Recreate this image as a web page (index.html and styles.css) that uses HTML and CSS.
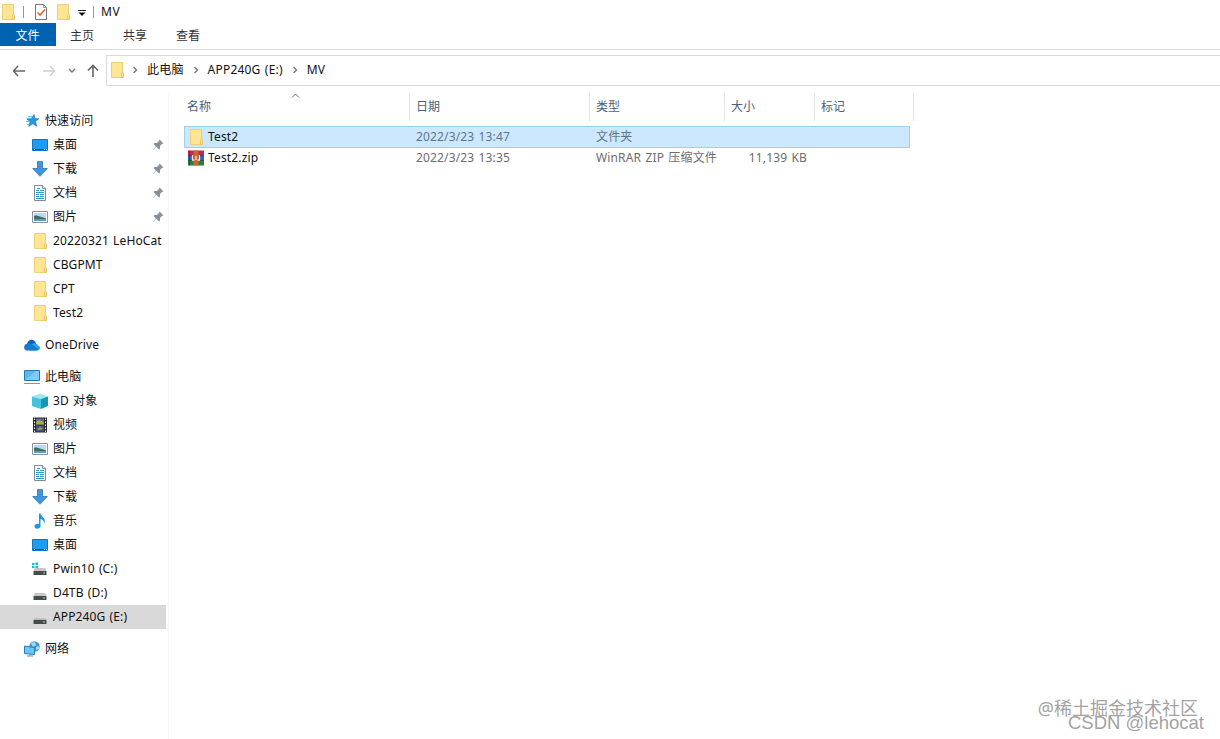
FILE: index.html
```html
<!DOCTYPE html>
<html lang="zh-CN">
<head>
    <meta charset="UTF-8">
    <meta name="viewport" content="width=device-width, initial-scale=1.0">
    <title>MV</title>
    <link rel="stylesheet" href="styles.css">
</head>
<body>
    <!-- shared icons -->
    <svg class="sprite">
        <symbol id="folder" viewBox="0 0 16 16">
            <path d="M2.500.5h11v10l.5 1v4H2.500z" fill="#ffe594" stroke="#edcf78"/>
            <path d="M12.500 15.500v-4l1-1.500 1 1.500v4z" fill="#ffe591" stroke="#e5bf55" stroke-width=".8"/>
        </symbol>
        <symbol id="desktop" viewBox="0 0 16 16">
            <path d="M.5 2.500h15v11H.5z" fill="#1b9df5" stroke="#1578bd"/>
            <path d="M1 12.500h14" stroke="#0b5a99"/>
            <path d="M2 12.500h1M12 12.500h1M14 12.500h1" stroke="#d8efff"/>
        </symbol>
        <symbol id="download" viewBox="0 0 16 16">
            <path d="M5.500.5h5v7h4.800L8 15.300.700 7.500h4.800z" fill="#3f96de" stroke="#2d78bb" stroke-width=".8"/>
        </symbol>
        <symbol id="document" viewBox="0 0 16 16">
            <path d="M2.500.5h8l3 3v12h-11z" fill="#fff" stroke="#85898d"/>
            <path d="M10.500.5v3h3" fill="#eee" stroke="#85898d"/>
            <path d="M5 3.500h3M4 5.500h3M8 5.500h4M4 7.500h8M4 9.500h3M8 9.500h4M4 11.500h3M8 11.500h4M4 13.500h8" stroke="#2a9cc4"/>
        </symbol>
        <symbol id="picture" viewBox="0 0 16 16">
            <path d="M.5 2.500h15v11H.5z" fill="#fff" stroke="#8a9299"/>
            <path d="M2 4h12v8H2z" fill="#b5dcf6"/>
            <path d="M2 7c3-1.500 5 1 12 2v1.500H2z" fill="#427067"/>
            <path d="M2 10h12v2H2z" fill="#5b9bcb"/>
        </symbol>
        <symbol id="pin" viewBox="0 0 12 12">
            <path d="M7.500.5l4 4-1.300.3-2.200 2.200.1 2.500-1 1L4.300 7.700.8 11.200.5 10.900 4 7.400 1.500 4.900l1-1 2.500.1 2.200-2.200z" fill="#858f98"/>
        </symbol>
        <symbol id="chevron" viewBox="0 0 6 8">
            <path d="M1.500 1l3 3-3 3" fill="none" stroke="#777" stroke-width="1.400"/>
        </symbol>
        <symbol id="drive" viewBox="0 0 16 16">
            <path d="M3 8h10l1.500 3h-13z" fill="#c6c6c6"/>
            <path d="M1.500 11h13v4h-13z" fill="#484b4d"/>
            <path d="M11 13h2" stroke="#77e38a"/>
        </symbol>
        <symbol id="drive-flat" viewBox="0 0 16 16">
            <path d="M2.500 9.500h11l1 1.500h-13z" fill="#b4b4b4"/>
            <path d="M1.500 11h13v4h-13z" fill="#484b4d"/>
            <path d="M11 13h2" stroke="#77e38a"/>
        </symbol>
    </svg>

    <div class="titlebar">
        <svg class="icon title-folder"><use href="#folder"/></svg>
        <span class="divider"></span>
        <svg class="icon check" viewBox="0 0 16 16">
            <path d="M2.500.5h8l3 3v12h-11z" fill="#fff" stroke="#77777a"/>
            <path d="M10.500.5v3h3" fill="none" stroke="#999"/>
            <path d="M4.500 8.500l2.500 2.500L12 5.500" fill="none" stroke="#e36231" stroke-width="1.600"/>
        </svg>
        <svg class="icon new-folder"><use href="#folder"/></svg>
        <svg class="drop" viewBox="0 0 8 6"><path d="M0 .5h8" stroke="#222"/><path d="M.5 2.500h7L4 6z" fill="#111"/></svg>
        <span class="divider"></span>
        <span class="title">MV</span>
    </div>

    <div class="tabs">
        <span class="tab active">文件</span>
        <span class="tab">主页</span>
        <span class="tab">共享</span>
        <span class="tab">查看</span>
    </div>

    <div class="nav">
        <div class="arrows">
            <svg width="14" height="12" viewBox="0 0 14 12"><path d="M6 1L1.500 6 6 11M1.500 6H13" fill="none" stroke="#666" stroke-width="1.500"/></svg>
            <svg class="forward" width="14" height="12" viewBox="0 0 14 12"><path d="M8 1l4.500 5L8 11M12.500 6H1" fill="none" stroke="#d0d0d0" stroke-width="1.500"/></svg>
            <svg class="recent" width="8" height="6" viewBox="0 0 8 6"><path d="M1 1l3 3 3-3" fill="none" stroke="#777" stroke-width="1.400"/></svg>
            <svg class="up" width="12" height="14" viewBox="0 0 12 14"><path d="M1 6.500l5-5 5 5M6 1.500V13" fill="none" stroke="#666" stroke-width="1.600"/></svg>
        </div>
        <div class="address">
            <svg class="icon"><use href="#folder"/></svg>
            <svg class="chevron"><use href="#chevron"/></svg>
            <span>此电脑</span>
            <svg class="chevron"><use href="#chevron"/></svg>
            <span class="drive-name">APP240G (E:)</span>
            <svg class="chevron"><use href="#chevron"/></svg>
            <span>MV</span>
        </div>
    </div>

    <div class="main">
        <div class="sidebar">
            <div class="item root">
                <svg class="icon" viewBox="0 0 16 16">
                    <path d="M10 1.500l.9 4 4.100.2-3.500 2.600 1.200 4.900-3.900-2.500-4 2.800 1.300-4.700L3 6l4.500-.4z" fill="#2199dc" stroke="#1779b4" stroke-width=".6"/>
                    <path d="M4 3.500h4M2.500 5.500h3M2 8.500h4M3 11.500h2" stroke="#62bff0"/>
                </svg>
                <span>快速访问</span>
            </div>
            <div class="item"><svg class="icon"><use href="#desktop"/></svg><span>桌面</span><svg class="pin"><use href="#pin"/></svg></div>
            <div class="item"><svg class="icon"><use href="#download"/></svg><span>下载</span><svg class="pin"><use href="#pin"/></svg></div>
            <div class="item"><svg class="icon"><use href="#document"/></svg><span>文档</span><svg class="pin"><use href="#pin"/></svg></div>
            <div class="item"><svg class="icon"><use href="#picture"/></svg><span>图片</span><svg class="pin"><use href="#pin"/></svg></div>
            <div class="item"><svg class="icon"><use href="#folder"/></svg><span>20220321 LeHoCat</span></div>
            <div class="item"><svg class="icon"><use href="#folder"/></svg><span>CBGPMT</span></div>
            <div class="item"><svg class="icon"><use href="#folder"/></svg><span>CPT</span></div>
            <div class="item"><svg class="icon"><use href="#folder"/></svg><span>Test2</span></div>

            <div class="item root group">
                <svg class="icon" viewBox="0 0 16 16">
                    <path d="M3 7.500C3.500 2 10.500 1 12 6.500l-3 4z" fill="#0b64b8"/>
                    <path d="M7 8c2-3 6.500-2 7 .5 3 .5 2.500 5-.5 5H5z" fill="#29a5ea"/>
                    <path d="M3.500 6.500c2-.8 4 .5 10.500 5.500-.5 1-1 1.500-2 1.500H3C-1 13-.8 7 3.500 6.500z" fill="#147bd1"/>
                </svg>
                <span>OneDrive</span>
            </div>

            <div class="item root group">
                <svg class="icon" viewBox="0 0 16 16">
                    <path d="M.5 1.500h15v10H.5z" fill="#55b9f3" stroke="#247cb5"/>
                    <path d="M1 11L12 2h3v9z" fill="#7acdfa"/>
                    <path d="M0 14.500h16" stroke="#8c9297"/>
                </svg>
                <span>此电脑</span>
            </div>
            <div class="item">
                <svg class="icon" viewBox="0 0 16 16">
                    <path d="M0 3.500L8 .5l8 3L9 6z" fill="#9ee7f2"/>
                    <path d="M0 3.500L9 6v10l-9-3z" fill="#42c5dc"/>
                    <path d="M9 6l7-2.500V13l-7 3z" fill="#1596b2"/>
                </svg>
                <span>3D 对象</span>
            </div>
            <div class="item">
                <svg class="icon" viewBox="0 0 16 16">
                    <path d="M1 .5h14v15H1z" fill="#292929"/>
                    <path d="M4 1.500h8v6H4z" fill="#526f9b"/>
                    <path d="M4 8.500h8v6H4z" fill="#415887"/>
                    <path d="M4 5l3-2 3 1 2 2v1.500H4zM5 13l3-3 3 2" fill="#b4a64d"/>
                    <path d="M2.500 1.500v14M13.500 1.500v14" stroke="#fff" stroke-dasharray="1.500 1.500"/>
                </svg>
                <span>视频</span>
            </div>
            <div class="item"><svg class="icon"><use href="#picture"/></svg><span>图片</span></div>
            <div class="item"><svg class="icon"><use href="#document"/></svg><span>文档</span></div>
            <div class="item"><svg class="icon"><use href="#download"/></svg><span>下载</span></div>
            <div class="item">
                <svg class="icon" viewBox="0 0 16 16">
                    <path d="M7 .5h1.500c.5 3.500 6.500 4.500 3.500 10 .3-2.500-1.300-4-3.500-4.500V13c0 3.500-6 3.500-6 .5 0-2.300 2.500-3.200 4.500-2.500z" fill="#159ae2"/>
                </svg>
                <span>音乐</span>
            </div>
            <div class="item"><svg class="icon"><use href="#desktop"/></svg><span>桌面</span></div>
            <div class="item">
                <svg class="icon" viewBox="0 0 16 16">
                    <path d="M0 2h2.500v2H0zM3.500 1.500H6V4H3.500zM0 5h2.500v2H0zM3.500 5H6v2.500H3.500z" fill="#19b6da"/>
                    <use href="#drive" y="-1" width="16" height="16"/>
                </svg>
                <span>Pwin10 (C:)</span>
            </div>
            <div class="item"><svg class="icon"><use href="#drive"/></svg><span>D4TB (D:)</span></div>
            <div class="item selected"><svg class="icon"><use href="#drive-flat"/></svg><span>APP240G (E:)</span></div>

            <div class="item root group">
                <svg class="icon" viewBox="0 0 16 16">
                    <circle cx="10.500" cy="5.500" r="5.200" fill="#3a9bd8"/>
                    <path d="M7 2l4-1 1 3-3 2zM12 6l3-1v3l-3 1z" fill="#a5d8ee"/>
                    <path d="M.5 5l10 1.500v7l-10-1z" fill="#6cc5f5" stroke="#277db4"/>
                    <path d="M3 15h6M6 13v2" stroke="#4b9cca"/>
                </svg>
                <span>网络</span>
            </div>
        </div>

        <div class="files">
            <div class="columns">
                <span>名称</span>
                <span>日期</span>
                <span>类型</span>
                <span>大小</span>
                <span>标记</span>
                <svg class="sort" viewBox="0 0 8 5"><path d="M.5 4.500L4 1l3.500 3.500" fill="none" stroke="#666"/></svg>
            </div>
            <div class="file active">
                <span class="name"><svg class="icon"><use href="#folder"/></svg>Test2</span>
                <span>2022/3/23 13:47</span>
                <span>文件夹</span>
                <span class="size"></span>
            </div>
            <div class="file">
                <span class="name">
                    <svg class="icon" viewBox="0 0 16 16">
                        <path d="M0 .5h16v5H0z" fill="#b92e50"/>
                        <path d="M0 5.500h16v5H0z" fill="#3d5db0"/>
                        <path d="M0 10.500h16v5H0z" fill="#26813f"/>
                        <path d="M1.500.5v15" stroke="#222" stroke-opacity=".5"/>
                        <path d="M5.500.5h5v15h-5z" fill="#cd6429"/>
                        <path d="M4.500 5v5h2M11.500 5v5h-2M8 6v4" fill="none" stroke="#f5dfd1" stroke-width="1.300"/>
                        <path d="M0 5.500h4M12 5.500h4M0 10.500h4M12 10.500h4" stroke="#2b2940" stroke-width=".7"/>
                    </svg>Test2.zip
                </span>
                <span>2022/3/23 13:35</span>
                <span>WinRAR ZIP 压缩文件</span>
                <span class="size">11,139 KB</span>
            </div>
        </div>
    </div>

    <div class="watermark">
        <div class="site">@稀土掘金技术社区</div>
        <div class="author">CSDN @lehocat</div>
    </div>
</body>
</html>
```
FILE: styles.css
```css
* {
    box-sizing: border-box;
}
body {
    margin: 0;
    height: 739px;
    overflow: hidden;
    background: #fff;
    color: #111;
    font-family: "Noto Sans", "Noto Sans CJK SC", sans-serif;
    font-size: 12px;
    line-height: 20px;
    white-space: nowrap;
}
svg {
    display: block;
    flex: none;
}
.sprite {
    position: absolute;
    width: 0;
    height: 0;
}
.icon {
    width: 16px;
    height: 16px;
}
.titlebar {
    display: flex;
    align-items: center;
    height: 23px;
}
.titlebar .divider {
    width: 1px;
    height: 12px;
    background: #999;
}
.title-folder {
    margin-right: 7px;
}
.check {
    margin: 1px 6px 0 9px;
}
.drop {
    width: 8px;
    height: 6px;
    margin: 3px 7px 0 7px;
}
.title {
    margin-left: 7px;
    letter-spacing: 0.5px;
}
.tabs {
    display: flex;
    height: 27px;
    border-bottom: 1px solid #dadbdc;
}
.tab {
    width: 53px;
    height: 23px;
    padding-right: 1px;
    line-height: 25px;
    text-align: center;
    color: #333;
}
.tab.active {
    width: 56px;
    background: #0063b1;
    color: #fff;
}
.nav {
    display: flex;
    height: 41px;
    padding-top: 5px;
}
.arrows {
    display: flex;
    align-items: center;
    width: 106px;
    height: 32px;
    padding-left: 12px;
}
.forward {
    margin-left: 16px;
}
.recent {
    margin-left: 12px;
}
.up {
    margin-left: 11px;
}
.address {
    display: flex;
    align-items: center;
    flex: 1;
    height: 31px;
    padding: 0 0 1px 2px;
    border: 1px solid #d9d9d9;
    border-right: 0;
}
.chevron {
    width: 6px;
    height: 8px;
    margin: 0 9px;
}
.address .icon + .chevron {
    margin-left: 7px;
}
.address span {
    letter-spacing: 0.2px;
    word-spacing: 1px;
}
.main {
    display: flex;
    height: 648px;
}
.sidebar {
    width: 169px;
    padding-top: 18px;
    border-right: 1px solid #f5f5f5;
}
.item {
    display: flex;
    align-items: center;
    gap: 5px;
    width: 166px;
    height: 24px;
    padding-left: 32px;
    letter-spacing: 0.12px;
    word-spacing: 1px;
}
.item.root {
    padding-left: 24px;
}
.item.group {
    margin-top: 8px;
}
.item.selected {
    background: #d9d9d9;
}
.pin {
    width: 12px;
    height: 12px;
    margin: 0 2px 0 auto;
}
.files {
    flex: 1;
    padding: 2px 0 0 15px;
}
.columns,
.file {
    display: grid;
    grid-template-columns: 226px 180px 135px 90px 99px;
}
.columns {
    position: relative;
    width: 730px;
    height: 28px;
    margin-bottom: 5px;
    color: #4c607a;
}
.columns span {
    padding-left: 6px;
    line-height: 27px;
    border-right: 1px solid #e5e5e5;
}
.columns span:first-child {
    padding-left: 3px;
}
.sort {
    position: absolute;
    left: 107px;
    top: 0;
    width: 9px;
    height: 5px;
}
.file {
    width: 726px;
    height: 21px;
    line-height: 19px;
    color: #6d6d6d;
    border: 1px solid transparent;
    letter-spacing: 0.15px;
    word-spacing: 1px;
}
.file > span {
    padding-left: 5px;
}
.file .name {
    display: flex;
    align-items: center;
    gap: 4px;
    padding-left: 3px;
    color: #111;
}
.file .size {
    padding: 0 9px 0 0;
    text-align: right;
}
.file.active {
    height: 22px;
    line-height: 20px;
    margin-bottom: -1px;
    background: #cce8ff;
    border-color: #99d1ef;
}
.file.active > span {
    color: #60758a;
}
.file.active .name {
    color: #111;
}
.watermark {
    position: absolute;
    right: 16px;
    bottom: 9px;
    color: #a3a3a3;
    text-align: right;
}
.site {
    margin-right: 6px;
    font-size: 18px;
    line-height: 14px;
}
.author {
    font-family: "Liberation Sans", sans-serif;
    font-size: 18.5px;
    line-height: 15px;
}
```
